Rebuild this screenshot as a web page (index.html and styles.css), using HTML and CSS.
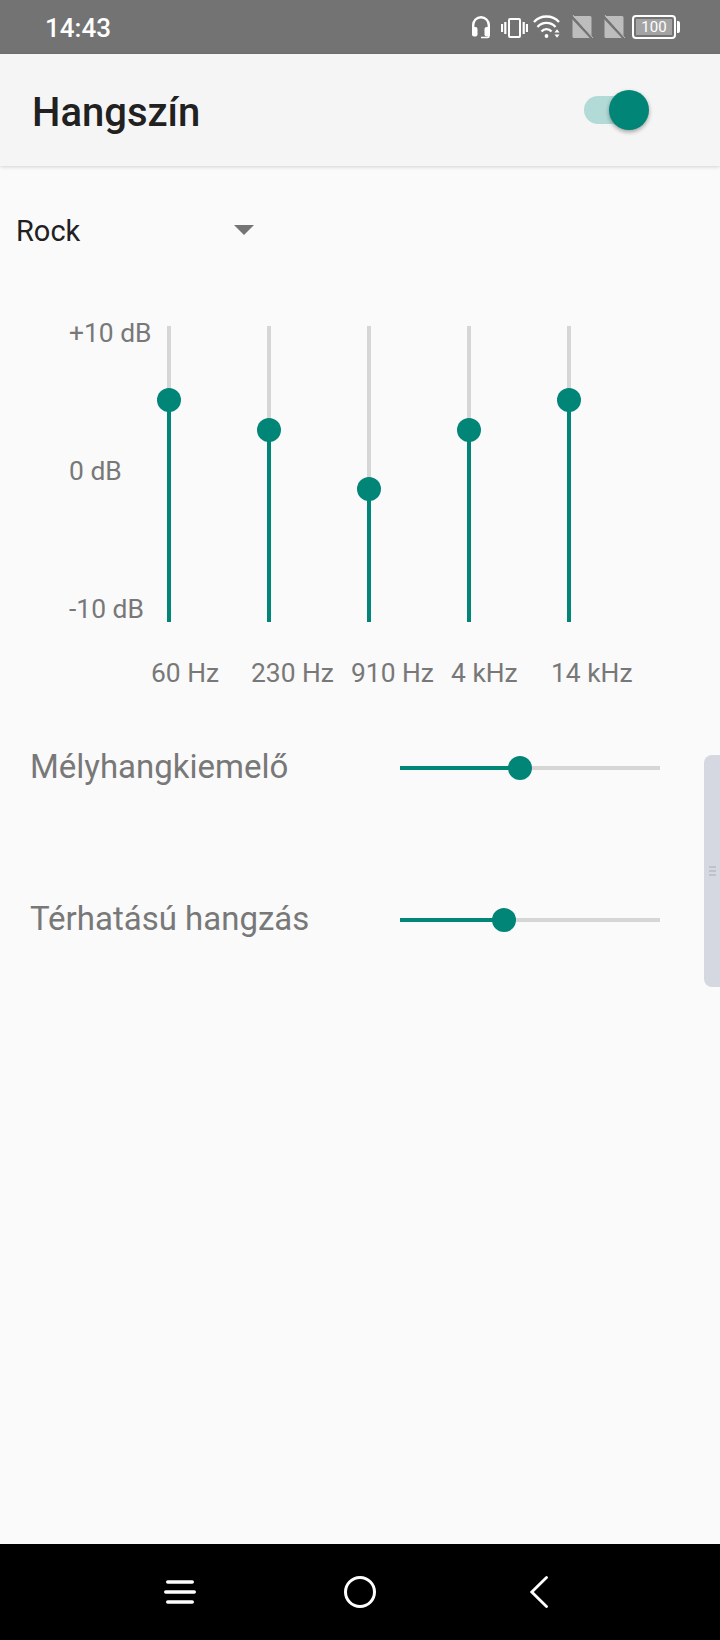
FILE: index.html
```html
<!doctype html>
<html lang="en">
<head>
    <meta charset="UTF-8">
    <title>Hangszín</title>
    <link rel="stylesheet" href="styles.css">
</head>
<body>
<div class="phone">
    <div class="status">
        <span class="clock">14:43</span>
        <div class="status-icons">
            <svg width="20" height="24" viewBox="0 0 20 24">
                <path d="M2.200 14V10a7.800 7.800 0 0 1 15.600 0v4" fill="none" stroke="#fff" stroke-width="2.400"/>
                <rect x="1" y="12" width="5.500" height="9.500" rx="2" fill="#fff"/>
                <rect x="13.500" y="12" width="5.500" height="9.500" rx="2" fill="#fff"/>
                <path d="M18 20v1a1.500 1.500 0 0 1-1.500 1.500H10" fill="none" stroke="#fff" stroke-width="1.600"/>
            </svg>
            <svg class="ic-vib" width="27" height="24" viewBox="0 0 27 24">
                <rect x="8" y="4" width="11" height="18" rx="1" fill="none" stroke="#fff" stroke-width="2"/>
                <path d="M1 9v8M4.300 7v12M22.700 7v12M26 9v8" stroke="#fff" stroke-width="2.200" fill="none"/>
            </svg>
            <svg class="ic-wifi" width="28" height="24" viewBox="0 0 28 24">
                <path d="M1 7a17 17 0 0 1 25 0M4.500 12a12 12 0 0 1 18 0M8.500 16.500a6.500 6.500 0 0 1 10 0" fill="none" stroke="#fff" stroke-width="2.300"/>
                <circle cx="13.500" cy="21" r="1.900" fill="#fff"/>
                <path d="M21.500 17.500l2.500-3.300 2.500 3.300zM21.500 19.500h5l-2.500 3.300z" fill="#fff"/>
            </svg>
            <svg class="ic-sim" width="22" height="25" viewBox="0 0 22 25">
                <rect x="0.500" y="1" width="19" height="22" rx="1.500" fill="#bdbdbd"/>
                <path d="M-1 1L21 24.500" stroke="#737373" stroke-width="2.600"/>
                <path d="M0 -1L21 23" stroke="#bdbdbd" stroke-width="1"/>
            </svg>
            <svg class="ic-sim2" width="22" height="25" viewBox="0 0 22 25">
                <rect x="0.500" y="1" width="19" height="22" rx="1.500" fill="#bdbdbd"/>
                <path d="M-1 1L21 24.500" stroke="#737373" stroke-width="2.600"/>
                <path d="M0 -1L21 23" stroke="#bdbdbd" stroke-width="1"/>
            </svg>
            <div class="battery">
                <div class="battery-body"><span class="battery-level">100</span></div>
                <div class="battery-cap"></div>
            </div>
        </div>
    </div>

    <div class="appbar">
        <h1 class="title">Hangszín</h1>
        <div class="switch">
            <div class="switch-track"></div>
            <div class="switch-thumb"></div>
        </div>
    </div>

    <div class="main">
        <div class="preset">
            <span class="preset-name">Rock</span>
            <span class="preset-arrow"></span>
        </div>

        <div class="eq">
            <div class="db-labels">
                <span>+10 dB</span>
                <span>0 dB</span>
                <span>-10 dB</span>
            </div>
            <div class="bands">
                <div class="vbar"><div class="vfill" style="height:222px"></div><div class="thumb vthumb" style="bottom:222px"></div></div>
                <div class="vbar"><div class="vfill" style="height:192px"></div><div class="thumb vthumb" style="bottom:192px"></div></div>
                <div class="vbar"><div class="vfill" style="height:133px"></div><div class="thumb vthumb" style="bottom:133px"></div></div>
                <div class="vbar"><div class="vfill" style="height:192px"></div><div class="thumb vthumb" style="bottom:192px"></div></div>
                <div class="vbar"><div class="vfill" style="height:222px"></div><div class="thumb vthumb" style="bottom:222px"></div></div>
            </div>
        </div>
        <div class="freqs">
            <span>60 Hz</span>
            <span>230 Hz</span>
            <span>910 Hz</span>
            <span>4 kHz</span>
            <span>14 kHz</span>
        </div>

        <div class="effect effect-bass">
            <span class="effect-name">Mélyhangkiemelő</span>
            <div class="hbar"><div class="hfill" style="width:120px"></div><div class="thumb hthumb" style="left:120px"></div></div>
        </div>
        <div class="effect effect-surround">
            <span class="effect-name">Térhatású hangzás</span>
            <div class="hbar"><div class="hfill" style="width:104px"></div><div class="thumb hthumb" style="left:104px"></div></div>
        </div>

        <div class="side-handle"><span></span><span></span><span></span></div>
    </div>

    <div class="navbar">
        <svg width="36" height="30" viewBox="0 0 36 30">
            <path d="M5.750 5h24.500M3.750 15h28.500M5.750 25h24.500" stroke="#fff" stroke-width="3.500" stroke-linecap="round" fill="none"/>
        </svg>
        <svg width="34" height="34" viewBox="0 0 34 34">
            <circle cx="17" cy="17" r="14.500" stroke="#fff" stroke-width="3" fill="none"/>
        </svg>
        <svg width="22" height="34" viewBox="0 0 22 34">
            <path d="M16.500 2.500L1.800 17l14.700 14.500" stroke="#fff" stroke-width="2.800" stroke-linecap="round" fill="none"/>
        </svg>
    </div>
</div>
</body>
</html>
```

FILE: styles.css
```css
* {
    margin: 0;
    padding: 0;
    box-sizing: border-box;
}

body {
    font-family: Roboto, "Liberation Sans", sans-serif;
    background-color: #fafafa;
}

.phone {
    width: 720px;
    height: 1640px;
    display: flex;
    flex-direction: column;
    overflow: hidden;
}

/* status bar */
.status {
    height: 54px;
    background-color: #737373;
    display: flex;
    align-items: center;
    justify-content: space-between;
    padding: 0 40px 0 45px;
    flex-shrink: 0;
}

.clock {
    color: #fff;
    font-size: 26px;
    font-weight: 500;
    padding-top: 1px;
}

.status-icons {
    display: flex;
    align-items: center;
}

.status-icons svg {
    display: block;
}

.ic-vib {
    margin-left: 10px;
}

.ic-wifi {
    margin-left: 5px;
}

.ic-sim {
    margin-left: 11px;
}

.ic-sim2 {
    margin-left: 10px;
}

.battery {
    display: flex;
    align-items: center;
    margin-left: 6px;
}

.battery-body {
    width: 44px;
    height: 24px;
    border: 2px solid #fff;
    border-radius: 4px;
    padding: 2px;
}

.battery-level {
    display: block;
    height: 16px;
    line-height: 16px;
    background-color: #a3a3a3;
    color: #fff;
    font-size: 15px;
    text-align: center;
}

.battery-cap {
    width: 3px;
    height: 12px;
    background-color: #fff;
    border-radius: 0 2px 2px 0;
    margin-left: 1px;
}

/* app bar */
.appbar {
    height: 112px;
    background-color: #f5f5f5;
    box-shadow: 0 1px 4px rgba(0, 0, 0, 0.16);
    display: flex;
    align-items: center;
    justify-content: space-between;
    padding: 0 71px 0 32px;
    flex-shrink: 0;
    position: relative;
    z-index: 2;
}

.title {
    font-size: 40px;
    font-weight: 500;
    color: #212121;
    padding-top: 4px;
}

.switch {
    width: 65px;
    height: 40px;
    position: relative;
}

.switch-track {
    position: absolute;
    left: 0;
    top: 6px;
    width: 56px;
    height: 28px;
    border-radius: 14px;
    background-color: #b2dad6;
}

.switch-thumb {
    position: absolute;
    right: 0;
    top: 0;
    width: 40px;
    height: 40px;
    border-radius: 50%;
    background-color: #008577;
    box-shadow: 0 2px 4px rgba(0, 0, 0, 0.35);
}

/* content */
.main {
    flex: 1;
    position: relative;
    background-color: #fafafa;
}

.preset {
    display: flex;
    align-items: center;
    justify-content: space-between;
    width: 238px;
    height: 40px;
    margin: 44px 0 0 16px;
}

.preset-name {
    font-size: 29px;
    color: #212121;
    padding-top: 2px;
}

.preset-arrow {
    width: 0;
    height: 0;
    border-left: 10px solid transparent;
    border-right: 10px solid transparent;
    border-top: 10px solid #757575;
}

.eq {
    display: flex;
    margin: 76px 0 0 69px;
    height: 296px;
}

.db-labels {
    width: 50px;
    height: 308px;
    margin-top: -9px;
    display: flex;
    flex-direction: column;
    justify-content: space-between;
    font-size: 26.4px;
    line-height: 32px;
    color: #787878;
    white-space: nowrap;
}

.bands {
    display: flex;
    gap: 96px;
    margin-left: 48px;
}

.vbar {
    width: 4px;
    height: 296px;
    background-color: #d6d6d6;
    position: relative;
}

.vfill {
    position: absolute;
    left: 0;
    bottom: 0;
    width: 4px;
    background-color: #008577;
}

.thumb {
    position: absolute;
    width: 24px;
    height: 24px;
    border-radius: 50%;
    background-color: #008577;
}

.vthumb {
    left: -10px;
    margin-bottom: -12px;
}

.freqs {
    display: grid;
    grid-template-columns: repeat(5, 100px);
    margin: 35px 0 0 151px;
    font-size: 26.4px;
    line-height: 32px;
    color: #787878;
    white-space: nowrap;
}

.effect {
    display: flex;
    align-items: center;
    justify-content: space-between;
    width: 630px;
    height: 40px;
    margin-left: 30px;
}

.effect-bass {
    margin-top: 59px;
}

.effect-surround {
    margin-top: 112px;
}

.effect-name {
    font-size: 33px;
    line-height: 38px;
    color: #787878;
    white-space: nowrap;
    margin-bottom: 2px;
}

.hbar {
    width: 260px;
    height: 4px;
    background-color: #d6d6d6;
    position: relative;
}

.hfill {
    position: absolute;
    left: 0;
    top: 0;
    height: 4px;
    background-color: #008577;
}

.hthumb {
    top: -10px;
    margin-left: -12px;
}

.side-handle {
    position: absolute;
    right: 0;
    top: 589px;
    width: 16px;
    height: 232px;
    background-color: #d5d8e0;
    border-radius: 8px 0 0 8px;
    display: flex;
    flex-direction: column;
    justify-content: center;
    align-items: flex-end;
    gap: 2px;
    padding-right: 4px;
}

.side-handle span {
    display: block;
    width: 7px;
    height: 2px;
    background-color: #bfc2cc;
}

/* nav bar */
.navbar {
    height: 96px;
    background-color: #000;
    flex-shrink: 0;
    display: flex;
    align-items: center;
    padding-left: 162px;
}

.navbar svg {
    display: block;
}

.navbar svg:nth-child(2) {
    margin-left: 145px;
}

.navbar svg:nth-child(3) {
    margin-left: 153px;
}
```
